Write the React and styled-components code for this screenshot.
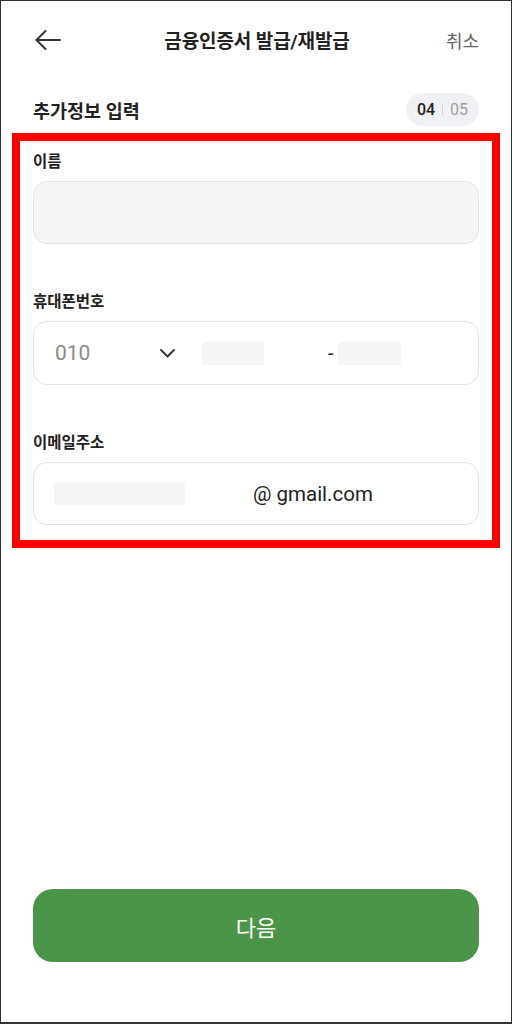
import React from "react";
import styled, { createGlobalStyle } from "styled-components";

const GlobalStyle = createGlobalStyle`
  html, body {
    margin: 0;
    padding: 0;
    background: #ffffff;
  }
  * {
    box-sizing: border-box;
  }
  body {
    font-family: "Roboto", "Noto Sans CJK KR", sans-serif;
    color: #222222;
  }
`;

const Frame = styled.main`
  width: 512px;
  height: 1024px;
  border: 1px solid #333333;
  border-bottom-width: 2px;
  display: flex;
  flex-direction: column;
  background: #ffffff;
`;

const Header = styled.header`
  height: 77px;
  display: grid;
  grid-template-columns: 1fr auto 1fr;
  align-items: center;
  padding: 0 32px 0 34px;
`;

const BackButton = styled.button`
  justify-self: start;
  border: none;
  background: none;
  padding: 0;
  display: flex;
  cursor: pointer;
`;

const Title = styled.h1`
  margin: 0;
  font-size: 19px;
  font-weight: 700;
  color: #222222;
  letter-spacing: -0.1px;
`;

const Cancel = styled.button`
  justify-self: end;
  border: none;
  background: none;
  padding: 0;
  font-family: inherit;
  font-size: 18px;
  color: #666666;
`;

const StepRow = styled.div`
  margin-top: 15px;
  height: 33px;
  display: flex;
  align-items: center;
  justify-content: space-between;
  padding: 0 32px 0 32px;
`;

const StepTitle = styled.h2`
  margin: 0;
  font-size: 18.5px;
  font-weight: 700;
  color: #222222;
`;

const StepBadge = styled.div`
  width: 73px;
  height: 33px;
  border-radius: 17px;
  background: #f0f1f4;
  display: flex;
  align-items: center;
  justify-content: center;
  gap: 7px;
  font-size: 16px;
`;

const StepNum = styled.span`
  color: ${(p) => (p.$current ? "#222222" : "#a0a0a0")};
  font-weight: ${(p) => (p.$current ? 500 : 400)};
`;

const StepDivider = styled.span`
  width: 1px;
  height: 11px;
  background: #d4d4d4;
`;

const Highlight = styled.section`
  margin: 7px 11px 0 11px;
  border: 8px solid #ff0000;
  padding: 10px 13px 15px 13px;
  display: flex;
  flex-direction: column;
  gap: 47px;
`;

const Field = styled.div`
  display: flex;
  flex-direction: column;
  gap: 8px;
`;

const Label = styled.label`
  font-size: 15.5px;
  font-weight: 700;
  line-height: 22px;
  color: #222222;
`;

const InputBox = styled.div`
  height: ${(p) => p.$h || 63}px;
  border: 1px solid #e3e3e3;
  border-radius: 14px;
  background: ${(p) => (p.$filled ? "#f5f5f5" : "#ffffff")};
  display: flex;
  align-items: center;
  padding-left: ${(p) => p.$pad || 20}px;
`;

const Prefix = styled.span`
  width: 105px;
  font-size: 21px;
  color: #8a8a8a;
`;

const Masked = styled.span`
  display: block;
  width: ${(p) => p.$w}px;
  height: 23px;
  background: #f5f5f5;
  margin-left: ${(p) => p.$ml || 0}px;
`;

const Dash = styled.span`
  margin-left: 64px;
  font-size: 20px;
  color: #222222;
  width: 7px;
`;

const Domain = styled.span`
  margin-left: 68px;
  font-size: 20.5px;
  color: #222222;
`;

const Spacer = styled.div`
  flex: 1;
`;

const NextButton = styled.button`
  margin: 0 32px 60px 32px;
  height: 73px;
  border: none;
  border-radius: 20px;
  background: #4a9548;
  color: #ffffff;
  font-family: inherit;
  font-size: 22px;
  font-weight: 400;
  cursor: pointer;
`;

const ArrowLeft = () => (
  <svg width="26" height="20" viewBox="0 0 26 20" fill="none">
    <path d="M25 10H1.5" stroke="#333" strokeWidth="2" strokeLinecap="round" />
    <path
      d="M10.5 1L1.5 10L10.5 19"
      stroke="#333"
      strokeWidth="2"
      strokeLinecap="round"
      strokeLinejoin="round"
    />
  </svg>
);

const Chevron = () => (
  <svg width="15" height="9" viewBox="0 0 15 9" fill="none">
    <path
      d="M1 1L7.5 7.5L14 1"
      stroke="#333"
      strokeWidth="1.8"
      strokeLinecap="round"
      strokeLinejoin="round"
    />
  </svg>
);

export default function App() {
  return (
    <>
      <GlobalStyle />
      <Frame>
        <Header>
          <BackButton aria-label="뒤로">
            <ArrowLeft />
          </BackButton>
          <Title>금융인증서 발급/재발급</Title>
          <Cancel>취소</Cancel>
        </Header>

        <StepRow>
          <StepTitle>추가정보 입력</StepTitle>
          <StepBadge>
            <StepNum $current>04</StepNum>
            <StepDivider />
            <StepNum>05</StepNum>
          </StepBadge>
        </StepRow>

        <Highlight>
          <Field>
            <Label>이름</Label>
            <InputBox $filled />
          </Field>

          <Field>
            <Label>휴대폰번호</Label>
            <InputBox $h={64} $pad={21}>
              <Prefix>010</Prefix>
              <Chevron />
              <Masked $w={62} $ml={27} />
              <Dash>-</Dash>
              <Masked $w={63} $ml={3} />
            </InputBox>
          </Field>

          <Field>
            <Label>이메일주소</Label>
            <InputBox>
              <Masked $w={131} />
              <Domain>@ gmail.com</Domain>
            </InputBox>
          </Field>
        </Highlight>

        <Spacer />
        <NextButton>다음</NextButton>
      </Frame>
    </>
  );
}
